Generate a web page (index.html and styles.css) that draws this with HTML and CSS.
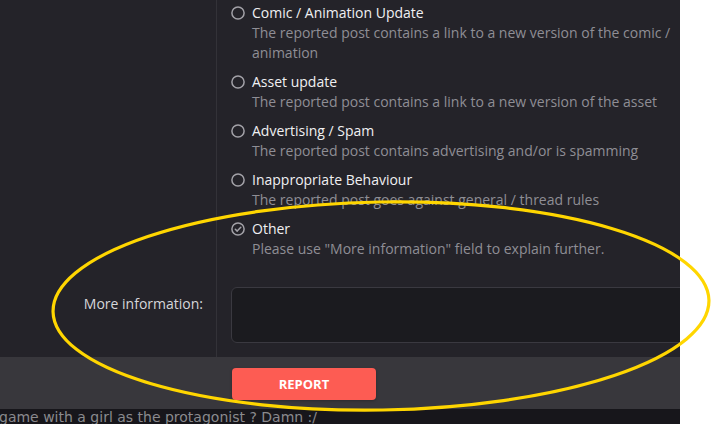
FILE: index.html
```html
<!DOCTYPE html>
<html lang="en">
<head>
<meta charset="utf-8">
<title>Report post</title>
<link rel="stylesheet" href="styles.css">
</head>
<body>
<div class="viewport">
  <div class="sheet">
    <div class="form">
      <div class="row row-choices">
        <div class="label"></div>
        <div class="field">
          <ul class="choices">
            <li class="choice">
              <svg class="radio" viewBox="0 0 14 14"><circle cx="7" cy="7" r="6.1"/></svg>
              <div class="choice-text">
                <div class="choice-title">Comic / Animation Update</div>
                <div class="choice-desc">The reported post contains a link to a new version of the comic / animation</div>
              </div>
            </li>
            <li class="choice">
              <svg class="radio" viewBox="0 0 14 14"><circle cx="7" cy="7" r="6.1"/></svg>
              <div class="choice-text">
                <div class="choice-title">Asset update</div>
                <div class="choice-desc">The reported post contains a link to a new version of the asset</div>
              </div>
            </li>
            <li class="choice">
              <svg class="radio" viewBox="0 0 14 14"><circle cx="7" cy="7" r="6.1"/></svg>
              <div class="choice-text">
                <div class="choice-title">Advertising / Spam</div>
                <div class="choice-desc">The reported post contains advertising and/or is spamming</div>
              </div>
            </li>
            <li class="choice">
              <svg class="radio" viewBox="0 0 14 14"><circle cx="7" cy="7" r="6.1"/></svg>
              <div class="choice-text">
                <div class="choice-title">Inappropriate Behaviour</div>
                <div class="choice-desc">The reported post goes against general / thread rules</div>
              </div>
            </li>
            <li class="choice">
              <svg class="radio" viewBox="0 0 14 14"><circle cx="7" cy="7" r="6.1"/><path d="M4.3 7.2 L6.2 9.1 L9.8 5.3"/></svg>
              <div class="choice-text">
                <div class="choice-title">Other</div>
                <div class="choice-desc">Please use "More information" field to explain further.</div>
              </div>
            </li>
          </ul>
        </div>
      </div>
      <div class="row row-info">
        <div class="label">More information:</div>
        <div class="field">
          <textarea class="input"></textarea>
        </div>
      </div>
    </div>
    <div class="footer">
      <button class="button">Report</button>
    </div>
    <div class="strip">game with a girl as the protagonist ? Damn :/</div>
  </div>
</div>
<svg class="annotation" viewBox="0 0 711 424" width="711" height="424">
  <ellipse cx="381" cy="306" rx="328" ry="104" transform="rotate(-1 381 306)"/>
</svg>
</body>
</html>
```

FILE: styles.css
```css
html, body {
  margin: 0;
  padding: 0;
  background: #ffffff;
}

body {
  width: 711px;
  height: 424px;
  overflow: hidden;
  font-family: "Open Sans", "Noto Sans", sans-serif;
}

.viewport {
  width: 680px;
  height: 424px;
  overflow: hidden;
  background: #242329;
}

.sheet {
  width: 720px;
}

.form {
  background: #242329;
}

.row {
  display: grid;
  grid-template-columns: 217px 1fr;
}

.label {
  border-right: 1px solid #333238;
  text-align: right;
  padding-right: 13px;
  color: #d6d6da;
  font-size: 14px;
  line-height: 20px;
}

.field {
  padding: 0 14px;
}

.row-choices .field {
  padding-top: 3px;
  padding-bottom: 14px;
}

.row-info .label {
  padding-top: 21px;
}

.row-info .field {
  padding-top: 14px;
  padding-bottom: 14px;
}

.choices {
  list-style: none;
  margin: 0;
  padding: 0;
  display: flex;
  flex-direction: column;
  gap: 9px;
}

.choice {
  display: flex;
  align-items: flex-start;
  gap: 7px;
}

.radio {
  flex: none;
  width: 14px;
  height: 14px;
  margin-top: 3px;
  fill: none;
  stroke: #a3a2a8;
  stroke-width: 1.5;
  stroke-linecap: round;
  stroke-linejoin: round;
}

.choice-text {
  flex: 1;
}

.choice-title {
  color: #f0f0f2;
  font-size: 14px;
  line-height: 20px;
}

.choice-desc {
  color: #8f8e95;
  font-size: 14px;
  line-height: 20px;
}

.input {
  display: block;
  box-sizing: border-box;
  width: 100%;
  height: 56px;
  margin: 0;
  background: #1b1b1f;
  border: 1px solid #3a3940;
  border-radius: 6px;
  resize: none;
  outline: none;
}

.footer {
  background: #38373c;
  height: 52px;
  box-sizing: border-box;
  padding: 11px 0 0 232px;
}

.button {
  display: block;
  width: 144px;
  height: 32px;
  border: none;
  border-radius: 4px;
  background: #fd5c53;
  color: #ffffff;
  font-family: "Open Sans", "Noto Sans", sans-serif;
  font-weight: 700;
  font-size: 13px;
  text-transform: uppercase;
  box-shadow: 0 1px 3px rgba(0, 0, 0, 0.25);
}

.strip {
  background: #17161b;
  height: 16px;
  color: #8a8a8e;
  font-family: "DejaVu Sans", Verdana, sans-serif;
  font-size: 14px;
  line-height: 16px;
  white-space: nowrap;
  margin-left: -1px;
}

.annotation {
  position: fixed;
  left: 0;
  top: 0;
  pointer-events: none;
}

.annotation ellipse {
  fill: none;
  stroke: #ffd600;
  stroke-width: 3.2;
}
```
